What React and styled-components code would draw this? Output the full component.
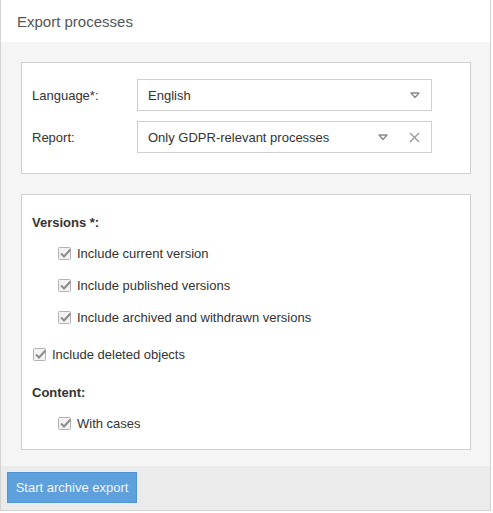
import React from "react";
import styled, { createGlobalStyle } from "styled-components";

const GlobalStyle = createGlobalStyle`
  body {
    margin: 0;
    font-family: "Liberation Sans", Arial, sans-serif;
    font-size: 13px;
    color: #333;
    background: #fff;
  }
`;

const Frame = styled.div`
  width: 491px;
  height: 511px;
  box-sizing: border-box;
  border: 1px solid #d2d2d2;
  border-top: none;
  display: flex;
  flex-direction: column;
`;

const Header = styled.div`
  height: 42px;
  flex: none;
  display: flex;
  align-items: center;
  padding-left: 16px;
  background: #fff;
  font-size: 15px;
  color: #555;
`;

const Body = styled.div`
  flex: 1;
  background: #f5f5f5;
  padding: 20px 19px 0 20px;
  display: flex;
  flex-direction: column;
  gap: 20px;
`;

const Panel = styled.div`
  background: #fff;
  border: 1px solid #d0d0d0;
  padding: ${(p) => p.$pad};
`;

const FieldRow = styled.div`
  display: grid;
  grid-template-columns: 105px 295px;
  align-items: center;
  & + & {
    margin-top: 10px;
  }
`;

const Label = styled.label`
  color: #333;
`;

const Select = styled.div`
  box-sizing: border-box;
  height: 32px;
  border: 1px solid #cfcfcf;
  display: flex;
  align-items: center;
  padding: 0 11px 0 10px;
  gap: 21px;
  color: #333;
`;

const SelectValue = styled.span`
  flex: 1;
`;

const SectionTitle = styled.div`
  font-weight: bold;
  line-height: 18px;
  margin-top: ${(p) => p.$top || 0}px;
`;

const CheckList = styled.div`
  margin-top: 5px;
`;

const CheckRow = styled.div`
  height: 32px;
  display: flex;
  align-items: center;
  gap: 5px;
  padding-left: ${(p) => (p.$nested ? 26 : 1)}px;
`;

const Footer = styled.div`
  height: 44px;
  flex: none;
  background: #ebebeb;
  padding: 6px 0 0 6px;
  box-sizing: border-box;
`;

const Button = styled.button`
  width: 130px;
  height: 31px;
  background: #5ea0dc;
  border: 1px solid #4f94d4;
  color: #eef4fb;
  font-family: "Liberation Sans", Arial, sans-serif;
  font-size: 13px;
  padding: 0;
  cursor: pointer;
`;

const Caret = () => (
  <svg width="10" height="7" viewBox="0 0 10 7">
    <path d="M1 1 H9 L5 5.5 Z" fill="none" stroke="#8a8a8a" strokeWidth="1.3" strokeLinejoin="round" />
  </svg>
);

const Clear = () => (
  <svg width="11" height="11" viewBox="0 0 11 11">
    <path d="M1 1 L10 10 M10 1 L1 10" stroke="#999" strokeWidth="1.4" />
  </svg>
);

const CheckIcon = () => (
  <svg width="14" height="14" viewBox="0 0 14 14">
    <rect x="0.5" y="1.5" width="12" height="12" rx="1" fill="#f2f2f2" stroke="#b3b3b3" />
    <path d="M3 7.5 L6 10.5 L12.5 3.5" fill="none" stroke="#8c8c8c" strokeWidth="2" />
  </svg>
);

const Check = ({ nested, children }) => (
  <CheckRow $nested={nested}>
    <CheckIcon />
    <span>{children}</span>
  </CheckRow>
);

export default function App() {
  return (
    <>
      <GlobalStyle />
      <Frame>
        <Header>Export processes</Header>
        <Body>
          <Panel $pad="16px 38px 20px 10px">
            <FieldRow>
              <Label>Language*:</Label>
              <Select>
                <SelectValue>English</SelectValue>
                <Caret />
              </Select>
            </FieldRow>
            <FieldRow>
              <Label>Report:</Label>
              <Select>
                <SelectValue>Only GDPR-relevant processes</SelectValue>
                <Caret />
                <Clear />
              </Select>
            </FieldRow>
          </Panel>
          <Panel $pad="19px 10px 10px 10px">
            <SectionTitle>Versions *:</SectionTitle>
            <CheckList>
              <Check nested>Include current version</Check>
              <Check nested>Include published versions</Check>
              <Check nested>Include archived and withdrawn versions</Check>
            </CheckList>
            <CheckList>
              <Check>Include deleted objects</Check>
            </CheckList>
            <SectionTitle $top={14}>Content:</SectionTitle>
            <CheckList>
              <Check nested>With cases</Check>
            </CheckList>
          </Panel>
        </Body>
        <Footer>
          <Button>Start archive export</Button>
        </Footer>
      </Frame>
    </>
  );
}
